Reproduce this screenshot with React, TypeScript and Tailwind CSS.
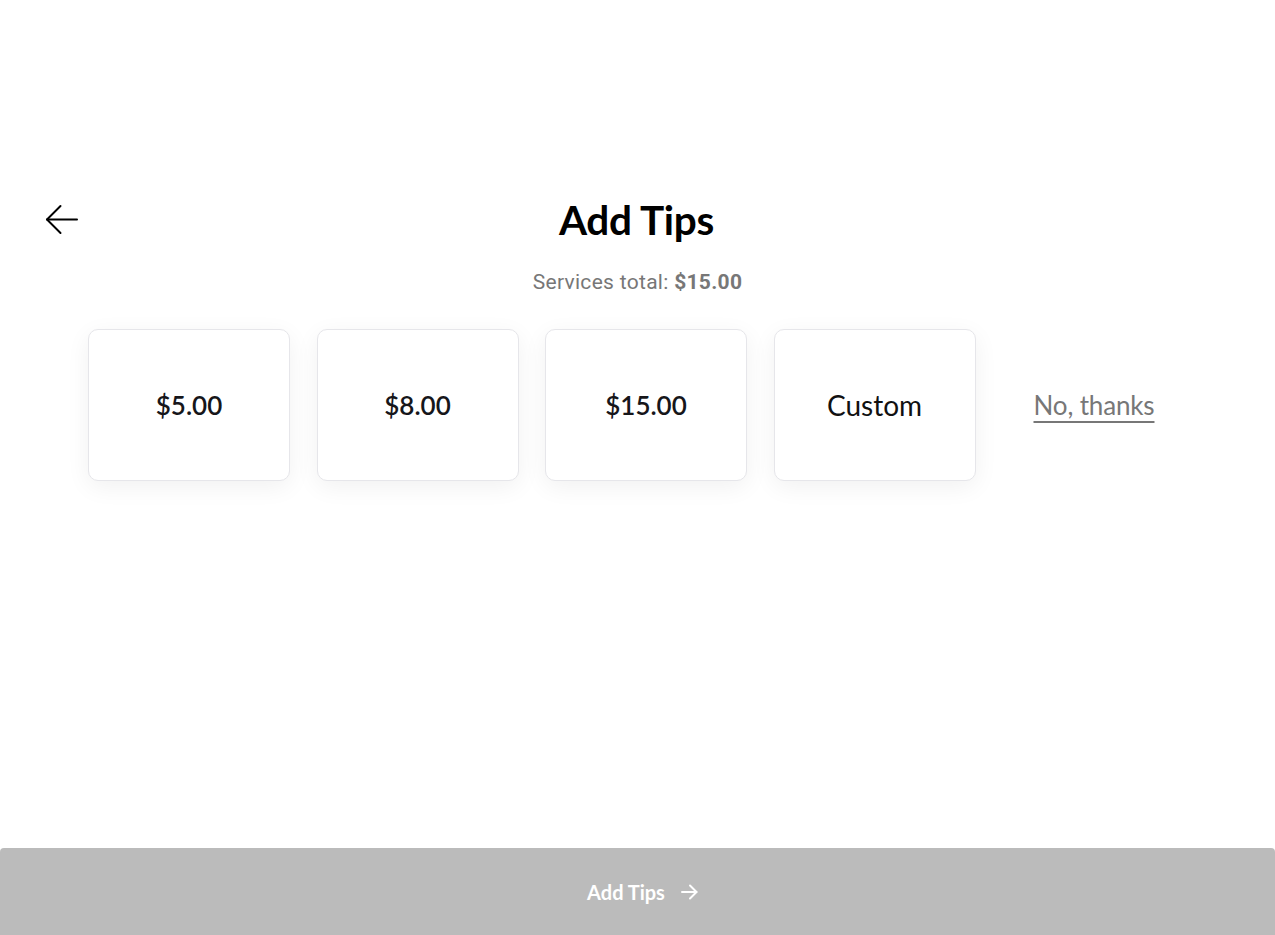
import React from "react";

const tips = ["$5.00", "$8.00", "$15.00"];

function ArrowLeft() {
  return (
    <svg width="34" height="32" viewBox="0 0 34 32" fill="none" stroke="#000" strokeWidth="2" strokeLinecap="round" strokeLinejoin="round">
      <path d="M32 15.5H2" />
      <path d="M15.5 2L2 15.5L15.5 29" />
    </svg>
  );
}

function ArrowRight() {
  return (
    <svg width="17" height="16" viewBox="0 0 17 16" fill="none" stroke="#fff" strokeWidth="2" strokeLinecap="round" strokeLinejoin="round">
      <path d="M1 8h14.5" />
      <path d="M9 1.5L15.5 8L9 14.5" />
    </svg>
  );
}

export default function App() {
  return (
    <div className="min-h-screen flex flex-col bg-white font-['Lato','Noto_Sans',sans-serif]">
      {/* Header */}
      <div className="relative flex justify-center pt-[193px]">
        <button className="absolute left-[45px] top-[204px]">
          <ArrowLeft />
        </button>
        <h1 className="text-[40.5px] leading-[54px] font-bold text-black tracking-[-0.3px] pr-[2px]">Add Tips</h1>
      </div>
      <p className="text-center mt-[20px] text-[21px] leading-[30px] text-[#777] font-['Roboto',sans-serif] tracking-[0.3px]">
        Services total: <span className="font-bold">$15.00</span>
      </p>

      {/* Options */}
      <div className="flex items-center pl-[88px] mt-[32px]">
        <div className="flex gap-[26.5px]">
          {tips.map((t) => (
            <button
              key={t}
              className="w-[202px] h-[152px] rounded-[10px] border border-[#e6e6ea] bg-white shadow-[0_6px_24px_rgba(0,0,0,0.06)] flex items-center justify-center text-[26px] font-semibold text-[#16161a]"
            >
              {t}
            </button>
          ))}
          <button className="w-[202px] h-[152px] rounded-[10px] border border-[#e6e6ea] bg-white shadow-[0_6px_24px_rgba(0,0,0,0.06)] flex items-center justify-center text-[28px] text-[#111]">
            Custom
          </button>
        </div>
        <button className="ml-[58px] text-[26px] text-[#777] underline underline-offset-[6px] decoration-[2px] tracking-[-0.15px]">
          No, thanks
        </button>
      </div>

      {/* Bottom bar */}
      <div className="mt-auto h-[87px] bg-[#bbbbbb] rounded-t-[4px] flex items-center justify-center gap-[16px] pl-[10px]">
        <span className="text-white text-[20px] font-bold">Add Tips</span>
        <ArrowRight />
      </div>
    </div>
  );
}
